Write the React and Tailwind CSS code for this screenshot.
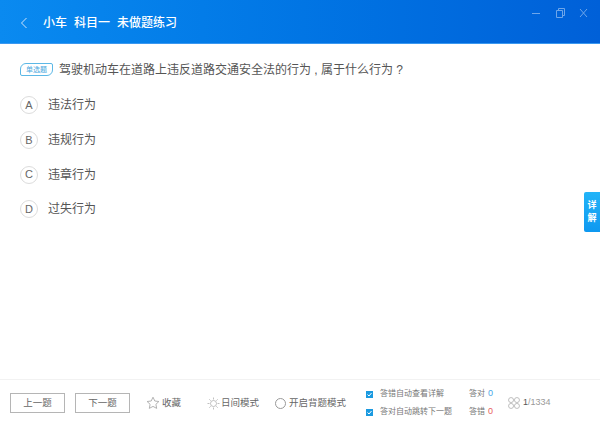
import React from "react";

const font = { fontFamily: '"Liberation Sans", "Noto Sans CJK SC", sans-serif' };

function Option({ letter, text }) {
  return (
    <div className="flex items-center h-[34.7px]">
      <div className="w-[18px] h-[18px] ml-[20px] rounded-full border border-[#dcdcdc] flex items-center justify-center text-[11px] text-[#666]">
        {letter}
      </div>
      <span className="ml-[10px] text-[12px] leading-none text-[#555]">{text}</span>
    </div>
  );
}

function WindowIcons() {
  return (
    <svg width="60" height="14" viewBox="0 0 60 14" fill="none" stroke="#6ea6ea" strokeWidth="1">
      <path d="M0 7.5h8" />
      <path d="M24.5 4.5h6v7h-6z" />
      <path d="M26.5 4.5v-2h6v7h-2" />
      <path d="M48 3l7 8M55 3l-7 8" />
    </svg>
  );
}

function Check() {
  return (
    <span className="w-[7px] h-[7px] bg-[#1b9ae0] flex items-center justify-center">
      <svg width="7" height="7" viewBox="0 0 7 7" fill="none" stroke="#fff" strokeWidth="1">
        <path d="M1.500 3.500l1.500 1.500 2.500-3" />
      </svg>
    </span>
  );
}

export default function App() {
  return (
    <div className="w-[600px] h-[426px] bg-white flex flex-col relative overflow-hidden" style={font}>
      <div className="h-[44px] shrink-0 pt-[3px] flex items-center bg-gradient-to-r from-[#0a8af0] to-[#0060d8] border-b border-[#3a98f0] text-white">
        <svg className="ml-[20px]" width="8" height="12" viewBox="0 0 8 12" fill="none" stroke="#cfe4fb" strokeWidth="1">
          <path d="M6.5 1L1.5 6l5 5" />
        </svg>
        <span className="ml-[15px] text-[12px] font-medium">小车</span>
        <span className="ml-[7px] text-[12px] font-medium">科目一</span>
        <span className="ml-[7px] text-[12px] font-medium">未做题练习</span>
        <div className="ml-auto mr-[8px] -mt-[20px] flex">
          <WindowIcons />
        </div>
      </div>

      <div className="flex-1 flex flex-col">
        <div className="flex items-center mt-[19px] ml-[20px]">
          <span className="w-[33px] h-[13px] border border-[#5cb8e6] rounded-tl-[6px] rounded-br-[6px] rounded-tr-[2px] rounded-bl-[2px] text-[7px] leading-none text-[#4aa8de] flex items-center justify-center">
            单选题
          </span>
          <span className="ml-[6px] text-[12px] leading-none text-[#555] whitespace-pre">驾驶机动车在道路上违反道路交通安全法的行为 , 属于什么行为 ?</span>
        </div>
        <div className="mt-[12px]">
          <Option letter="A" text="违法行为" />
          <Option letter="B" text="违规行为" />
          <Option letter="C" text="违章行为" />
          <Option letter="D" text="过失行为" />
        </div>
      </div>

      <div className="h-[47px] shrink-0 border-t border-[#f2f2f2] flex items-center text-[9.5px] text-[#666]">
        <button className="ml-[10px] w-[55px] h-[20px] border border-[#b5b5b5] text-[9.5px] text-[#666]">上一题</button>
        <button className="ml-[10px] w-[55px] h-[20px] border border-[#b5b5b5] text-[9.5px] text-[#666]">下一题</button>
        <svg className="ml-[16px]" width="14" height="14" viewBox="0 0 14 14" fill="none" stroke="#aaa" strokeWidth="0.9">
          <path d="M7 1.2l1.8 3.8 4.1.5-3 2.800.8 4.100L7 10.400 3.300 12.400l.8-4.100-3-2.800 4.100-.5z" />
        </svg>
        <span className="ml-[2px]">收藏</span>
        <svg className="ml-[26px]" width="13" height="13" viewBox="0 0 13 13" fill="none" stroke="#b0b0b0" strokeWidth="0.8">
          <circle cx="6.500" cy="6.500" r="3" />
          <path d="M6.500 0.500v2M6.500 10.500v2M0.500 6.500h2M10.500 6.500h2M2.300 2.300l1.400 1.400M9.300 9.300l1.400 1.400M2.300 10.700l1.400-1.400M9.300 3.700l1.400-1.400" />
        </svg>
        <span className="ml-[1px]">日间模式</span>
        <span className="ml-[16px] w-[11px] h-[11px] rounded-full border border-[#999]" />
        <span className="ml-[3px]">开启背题模式</span>

        <div className="ml-[20px] flex flex-col gap-[7px] text-[8px] text-[#777]">
          <div className="flex items-center h-[11px]">
            <Check />
            <span className="ml-[7px] w-[72px]">答错自动查看详解</span>
            <span className="ml-[17px]">答对</span>
            <span className="ml-[3px] text-[#4aa8e8] text-[9px]">0</span>
          </div>
          <div className="flex items-center h-[11px]">
            <Check />
            <span className="ml-[7px] w-[72px]">答对自动跳转下一题</span>
            <span className="ml-[17px]">答错</span>
            <span className="ml-[3px] text-[#e86060] text-[9px]">0</span>
          </div>
        </div>

        <svg className="ml-[15px]" width="12" height="12" viewBox="0 0 11 11" fill="none" stroke="#b5b5b5" strokeWidth="0.8">
          <circle cx="2.800" cy="2.800" r="2.300" />
          <circle cx="8.200" cy="2.800" r="2.300" />
          <circle cx="2.800" cy="8.200" r="2.300" />
          <circle cx="8.200" cy="8.200" r="2.300" />
        </svg>
        <span className="ml-[3px] text-[9px] text-[#999]">
          <span className="text-[#555]">1</span>/1334
        </span>
      </div>

      <div className="absolute right-0 top-[192px] w-[16px] h-[40px] bg-gradient-to-b from-[#22b4f8] to-[#0e98f0] rounded-l-[2px] text-white text-[9px] font-bold leading-[13px] flex flex-col items-center justify-center">
        <span>详</span>
        <span>解</span>
      </div>
    </div>
  );
}
